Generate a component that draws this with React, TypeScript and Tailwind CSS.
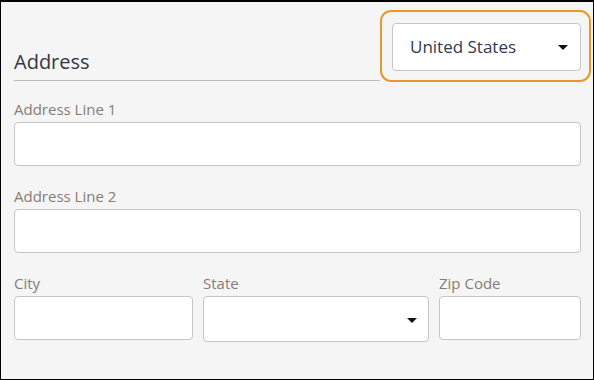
const font = { fontFamily: '"Open Sans", "Noto Sans", sans-serif' };

function Caret() {
  return (
    <svg width="10" height="5" viewBox="0 0 10 5" className="shrink-0">
      <polygon points="0,0 10,0 5,5" fill="#111" />
    </svg>
  );
}

function Label({ children }: { children: React.ReactNode }) {
  return <div className="text-[15px] leading-[20px] text-[#877d75] mb-[3px]">{children}</div>;
}

export default function App() {
  return (
    <div
      className="w-[594px] h-[380px] bg-[#f5f5f5] border border-t-2 border-black flex flex-col pl-[13px] pr-[12px]"
      style={font}
    >
      {/* header */}
      <div className="flex pt-[8px] -mr-[10px]">
        <div className="flex-1 h-[71px] flex items-end border-b border-[#bdbdbd]">
          <h2 className="text-[20px] leading-[28px] text-[#333841] pb-[4px]">Address</h2>
        </div>
        <div className="w-[211px] h-[72px] border-2 border-[#e8992e] rounded-[11px] pl-[10px] pt-[11px]">
          <div className="w-[189px] h-[48px] bg-white border border-[#c6c6c6] rounded-[4px] flex items-center justify-between pl-[17px] pr-[12px]">
            <span className="text-[17px] text-[#2f3a50]">United States</span>
            <Caret />
          </div>
        </div>
      </div>

      {/* address lines */}
      <div className="mt-[17px]">
        <Label>Address Line 1</Label>
        <div className="h-[44px] bg-white border border-[#c6c6c6] rounded-[4px]" />
      </div>
      <div className="mt-[20px]">
        <Label>Address Line 2</Label>
        <div className="h-[44px] bg-white border border-[#c6c6c6] rounded-[4px]" />
      </div>

      {/* city / state / zip */}
      <div className="flex gap-[10px] mt-[20px] items-start">
        <div className="w-[179px]">
          <Label>City</Label>
          <div className="h-[44px] bg-white border border-[#c6c6c6] rounded-[4px]" />
        </div>
        <div className="w-[226px]">
          <Label>State</Label>
          <div className="h-[46px] bg-white border border-[#c6c6c6] rounded-[4px] flex items-center justify-end pr-[11px] pt-[3px]">
            <Caret />
          </div>
        </div>
        <div className="w-[142px]">
          <Label>Zip Code</Label>
          <div className="h-[44px] bg-white border border-[#c6c6c6] rounded-[4px]" />
        </div>
      </div>
    </div>
  );
}
